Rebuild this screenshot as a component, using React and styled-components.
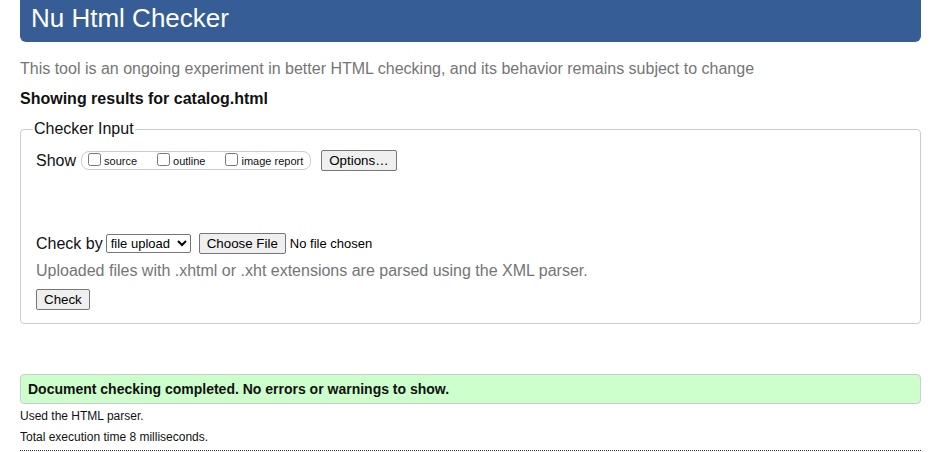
import React from 'react';
import styled, { createGlobalStyle } from 'styled-components';

const GlobalStyle = createGlobalStyle`
  body {
    margin: 0;
    background: #fff;
    font-family: 'Liberation Sans', Arial, sans-serif;
    color: #111;
  }
`;

const Page = styled.div`
  padding: 0 11px 0 20px;
`;

const Header = styled.h1`
  margin: 0;
  height: 42px;
  box-sizing: border-box;
  padding: 2px 0 0 11px;
  background: #365d95;
  color: #fff;
  font-size: 26px;
  font-weight: normal;
  line-height: 32px;
  border-radius: 0 0 6px 6px;
`;

const Intro = styled.p`
  margin: 17px 0 0;
  font-size: 16px;
  line-height: 20px;
  color: #757575;
`;

const Results = styled.h2`
  margin: 10px 0 0;
  font-size: 16px;
  line-height: 20px;
  font-weight: bold;
  color: #111;
`;

const Fieldset = styled.fieldset`
  margin: 10px 0 0;
  padding: 0 15px 13px;
  border: 1px solid #ccc;
  border-radius: 4px;
  min-width: 0;
`;

const Legend = styled.legend`
  padding: 0 1px;
  margin-left: -3px;
  font-size: 16px;
  line-height: 20px;
  color: #111;
`;

const Row = styled.div`
  display: flex;
  align-items: center;
  margin-top: ${p => p.$top || 0}px;
  font-size: 16px;
  color: #111;
`;

const Label = styled.span`
  font-size: 16px;
  line-height: 20px;
  margin-right: ${p => p.$gap || 5}px;
`;

const Group = styled.span`
  display: inline-flex;
  align-items: center;
  height: 19px;
  box-sizing: border-box;
  padding: 0 7px 0 6px;
  border: 1px solid #ccc;
  border-radius: 8px;
  gap: 20px;
`;

const Choice = styled.label`
  display: inline-flex;
  align-items: center;
  font-size: 11px;
  color: #111;
`;

const Box = styled.input`
  width: 13px;
  height: 13px;
  margin: 0 3px 2px 0;
`;

const Button = styled.button`
  font-family: 'Liberation Sans', Arial, sans-serif;
  font-size: 13.33px;
  height: 21px;
  padding: 0 7px;
  background: #efefef;
  border: 1px solid #767676;
  border-radius: 2px;
  color: #000;
  margin-left: ${p => p.$left || 0}px;
`;

const Select = styled.select`
  font-family: 'Liberation Sans', Arial, sans-serif;
  font-size: 13px;
  height: 19px;
  width: 85px;
  padding: 0;
  border: 1px solid #767676;
  border-radius: 2px;
  background: #fff;
  color: #000;
`;

const Small = styled.span`
  font-size: 13px;
  color: #000;
  margin-left: 4px;
`;

const Hint = styled.p`
  margin: 7px 0 0;
  font-size: 16px;
  line-height: 20px;
  color: #757575;
`;

const Success = styled.div`
  margin-top: 50px;
  height: 30px;
  box-sizing: border-box;
  padding: 0 0 0 7px;
  display: flex;
  align-items: center;
  background: #ccffcc;
  border: 1px solid #ccc;
  border-radius: 4px;
  font-size: 14px;
  font-weight: bold;
  color: #111;
`;

const Note = styled.p`
  margin: ${p => p.$top || 0}px 0 0;
  font-size: 12px;
  line-height: 21px;
  color: #111;
`;

const Rule = styled.hr`
  margin: 2px 0 0;
  border: 0;
  border-top: 1px dotted #333;
`;

export default function App() {
  return (
    <Page>
      <GlobalStyle />
      <Header>Nu Html Checker</Header>
      <Intro>
        This tool is an ongoing experiment in better HTML checking, and its behavior remains subject to change
      </Intro>
      <Results>Showing results for catalog.html</Results>
      <Fieldset>
        <Legend>Checker Input</Legend>
        <Row $top={11}>
          <Label>Show</Label>
          <Group>
            <Choice><Box type="checkbox" />source</Choice>
            <Choice><Box type="checkbox" />outline</Choice>
            <Choice><Box type="checkbox" />image report</Choice>
          </Group>
          <Button $left={10}>Options…</Button>
        </Row>
        <Row $top={62}>
          <Label $gap={3}>Check by</Label>
          <Select defaultValue="file">
            <option value="file">file upload</option>
            <option value="address">address</option>
            <option value="text">text input</option>
          </Select>
          <Button $left={8}>Choose File</Button>
          <Small>No file chosen</Small>
        </Row>
        <Hint>Uploaded files with .xhtml or .xht extensions are parsed using the XML parser.</Hint>
        <Row $top={8}>
          <Button>Check</Button>
        </Row>
      </Fieldset>
      <Success>Document checking completed. No errors or warnings to show.</Success>
      <Note $top={2}>Used the HTML parser.</Note>
      <Note>Total execution time 8 milliseconds.</Note>
      <Rule />
    </Page>
  );
}
